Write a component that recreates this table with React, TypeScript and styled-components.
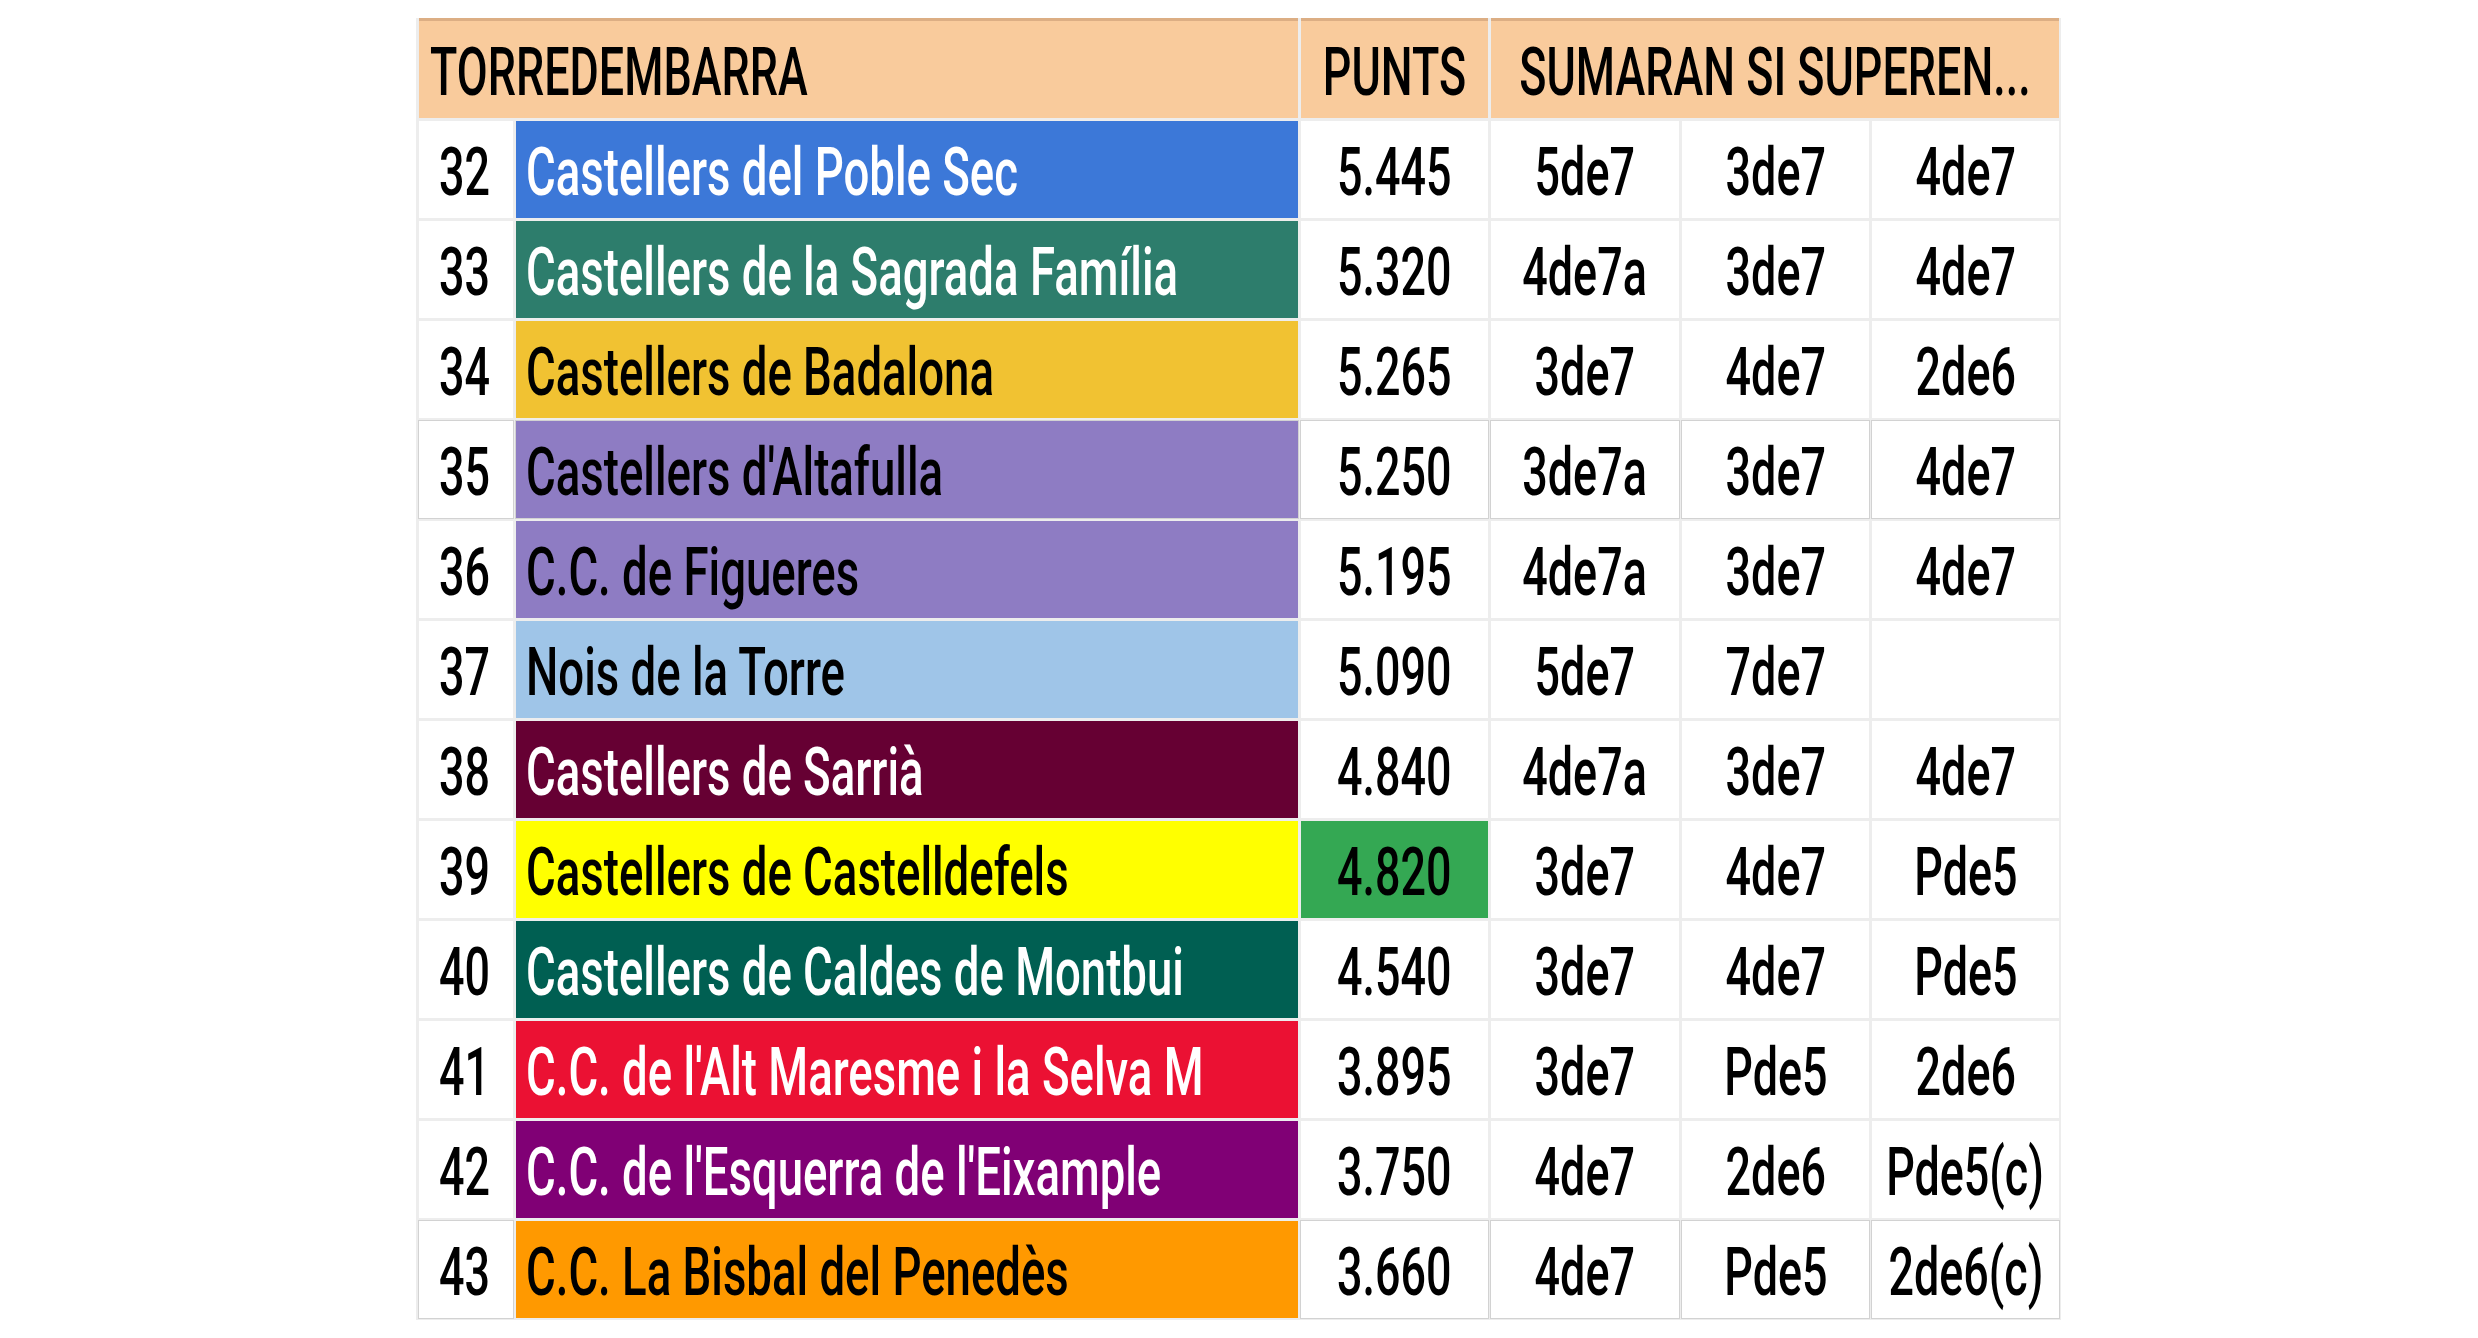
import styled, { createGlobalStyle } from "styled-components";

const GlobalStyle = createGlobalStyle`
  html, body {
    margin: 0;
    padding: 0;
    background: #fff;
  }
  body {
    font-family: Roboto, "Liberation Sans", sans-serif;
  }
`

type Row = {
  pos: number
  name: string
  bg: string
  fg: string
  punts: string
  puntsBg?: string
  sumes: string[]
  outlined?: boolean
}

const rows: Row[] = [
  { pos: 32, name: "Castellers del Poble Sec", bg: "#3c78d8", fg: "#fff", punts: "5.445", sumes: ["5de7", "3de7", "4de7"] },
  { pos: 33, name: "Castellers de la Sagrada Família", bg: "#2d7d6c", fg: "#fff", punts: "5.320", sumes: ["4de7a", "3de7", "4de7"] },
  { pos: 34, name: "Castellers de Badalona", bg: "#f1c232", fg: "#000", punts: "5.265", sumes: ["3de7", "4de7", "2de6"] },
  { pos: 35, name: "Castellers d'Altafulla", bg: "#8e7cc3", fg: "#000", punts: "5.250", sumes: ["3de7a", "3de7", "4de7"], outlined: true },
  { pos: 36, name: "C.C. de Figueres", bg: "#8e7cc3", fg: "#000", punts: "5.195", sumes: ["4de7a", "3de7", "4de7"] },
  { pos: 37, name: "Nois de la Torre", bg: "#9fc5e8", fg: "#000", punts: "5.090", sumes: ["5de7", "7de7", ""] },
  { pos: 38, name: "Castellers de Sarrià", bg: "#660033", fg: "#fff", punts: "4.840", sumes: ["4de7a", "3de7", "4de7"] },
  { pos: 39, name: "Castellers de Castelldefels", bg: "#ffff00", fg: "#000", punts: "4.820", puntsBg: "#34a853", sumes: ["3de7", "4de7", "Pde5"] },
  { pos: 40, name: "Castellers de Caldes de Montbui", bg: "#005f52", fg: "#fff", punts: "4.540", sumes: ["3de7", "4de7", "Pde5"] },
  { pos: 41, name: "C.C. de l'Alt Maresme i la Selva M", bg: "#eb1133", fg: "#fff", punts: "3.895", sumes: ["3de7", "Pde5", "2de6"] },
  { pos: 42, name: "C.C. de l'Esquerra de l'Eixample", bg: "#800075", fg: "#fff", punts: "3.750", sumes: ["4de7", "2de6", "Pde5(c)"] },
  { pos: 43, name: "C.C. La Bisbal del Penedès", bg: "#ff9900", fg: "#000", punts: "3.660", sumes: ["4de7", "Pde5", "2de6(c)"], outlined: true },
]

const App = () => {
  return (
    <>
      <GlobalStyle />
      <Page>
        <Table>
          <HeadCell $span={2} $align="left">
            <Squeeze $origin="left">TORREDEMBARRA</Squeeze>
          </HeadCell>
          <HeadCell $span={1} $align="center">
            <Squeeze $origin="center">PUNTS</Squeeze>
          </HeadCell>
          <HeadCell $span={3} $align="center">
            <Squeeze $origin="center">SUMARAN SI SUPEREN...</Squeeze>
          </HeadCell>

          {rows.map((r) => (
            <Line key={r.pos}>
              <PosCell $outlined={r.outlined}>
                <Squeeze $origin="right">{r.pos}</Squeeze>
              </PosCell>
              <NameCell $bg={r.bg} $fg={r.fg} $outlined={r.outlined && r.pos === 35}>
                <Squeeze $origin="left" $scale={0.69}>{r.name}</Squeeze>
              </NameCell>
              <ValueCell $bg={r.puntsBg} $outlined={r.outlined}>
                <Squeeze $origin="center">{r.punts}</Squeeze>
              </ValueCell>
              {r.sumes.map((s, i) => (
                <ValueCell key={i} $outlined={r.outlined}>
                  <Squeeze $origin="center">{s}</Squeeze>
                </ValueCell>
              ))}
            </Line>
          ))}
        </Table>
      </Page>
    </>
  )
}

export default App

const Page = styled.div`
  width: 2478px;
  height: 1338px;
  padding: 18px 0 0 416px;
  box-sizing: border-box;
  background: #fff;
  overflow: hidden;
`

const Table = styled.div`
  display: inline-grid;
  grid-template-columns: 94px 782px 187px 188px 187px 187px;
  grid-template-rows: 100px;
  grid-auto-rows: 97px;
  gap: 3px;
  padding: 0 2px 2px 3px;
  background: #ededed;
`

const Line = styled.div`
  display: contents;
`

const Squeeze = styled.span<{ $origin: string; $scale?: number }>`
  display: inline-block;
  white-space: nowrap;
  transform: scaleX(${(p) => p.$scale ?? 0.68});
  transform-origin: ${(p) => p.$origin} center;
`

const HeadCell = styled.div<{ $span: number; $align: string }>`
  grid-column: span ${(p) => p.$span};
  box-sizing: border-box;
  border-top: 3px solid #dcae84;
  background: #f9cb9c;
  display: flex;
  align-items: center;
  justify-content: ${(p) => (p.$align === "left" ? "flex-start" : "center")};
  padding: 7px 0 0 ${(p) => (p.$align === "left" ? "11px" : "0")};
  font-size: 66px;
  font-weight: 500;
  color: #000;
  line-height: 1;
`

const BaseCell = styled.div<{ $outlined?: boolean }>`
  display: flex;
  align-items: center;
  box-sizing: border-box;
  padding-top: 7px;
  font-size: 66px;
  font-weight: 500;
  line-height: 1;
  box-shadow: ${(p) => (p.$outlined ? "0 0 0 1px #d2d2d2" : "none")};
`

const PosCell = styled(BaseCell)`
  background: #fff;
  color: #000;
  justify-content: flex-end;
  padding-right: 23px;
`

const NameCell = styled(BaseCell)<{ $bg: string; $fg: string }>`
  background: ${(p) => p.$bg};
  color: ${(p) => p.$fg};
  justify-content: flex-start;
  padding-left: 10px;
`

const ValueCell = styled(BaseCell)<{ $bg?: string }>`
  background: ${(p) => p.$bg || "#fff"};
  color: #000;
  justify-content: center;
`
